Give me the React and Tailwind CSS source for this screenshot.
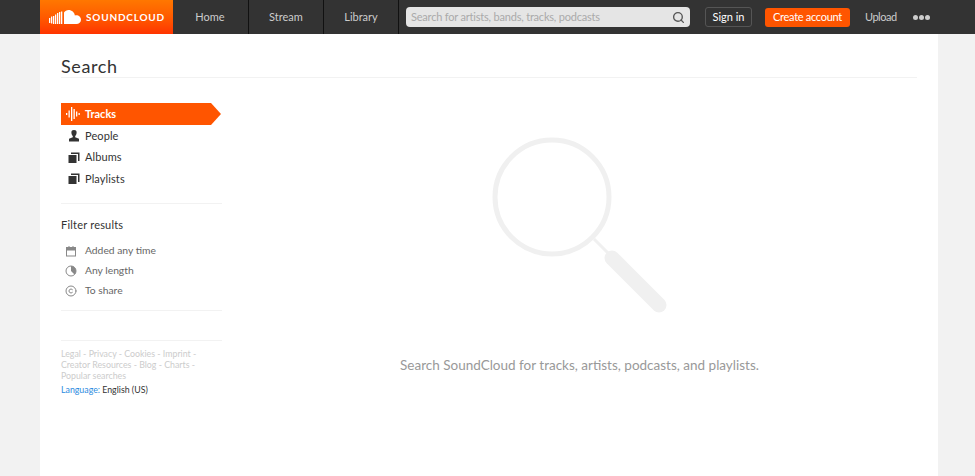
import { Search, Copyright } from 'lucide-react';

const font = { fontFamily: '"Lato", "Liberation Sans", sans-serif' };

const NavLink = ({ children, extra = '' }) => (
  <a className={`w-[75px] h-full flex items-center justify-center border-r border-[#111] text-[11px] text-[#ccc] ${extra}`}>{children}</a>
);

const Stack = () => (
  <svg width="12" height="12" viewBox="0 0 12 12" className="shrink-0">
    <path d="M3 0.500h8.500V9h-1.500V2H3z" fill="#333" />
    <rect x="0.500" y="3" width="8" height="8" fill="#333" />
  </svg>
);

const Person = () => (
  <svg width="12" height="12" viewBox="0 0 12 12" className="shrink-0">
    <path d="M6 0a2.6 2.6 0 0 1 2.6 2.8c0 1.5-.8 2.7-1.400 3.200v1.200l3.800 1.600V11.500H1V8.800l3.800-1.600V6C4.200 5.500 3.400 4.300 3.400 2.800A2.600 2.600 0 0 1 6 0z" fill="#333" />
  </svg>
);

const Logo = () => (
  <svg width="32" height="15" viewBox="0 0 32 15" fill="#fff" className="shrink-0">
    <rect x="0" y="8" width="1.300" height="5" />
    <rect x="2" y="6.500" width="1.300" height="7" />
    <rect x="4" y="6" width="1.300" height="8" />
    <rect x="6" y="4.500" width="1.300" height="9.500" />
    <rect x="8" y="3" width="1.300" height="11" />
    <rect x="10" y="2" width="1.300" height="12" />
    <rect x="12" y="1.500" width="1.300" height="12.500" />
    <path d="M15 14V2.500C16 1 17.700 0 19.500 0c3.300 0 6 2.400 6.400 5.600.4-.2.900-.3 1.400-.3 2.600 0 4.700 1.900 4.700 4.400S30 14 27.400 14z" />
  </svg>
);

const Wave = () => (
  <svg width="14" height="14" viewBox="0 0 14 14" fill="#fff" className="shrink-0">
    <rect x="0" y="6" width="1.300" height="2" />
    <rect x="2.500" y="3.500" width="1.300" height="7" />
    <rect x="5" y="0" width="1.300" height="14" />
    <rect x="7.500" y="2" width="1.300" height="10" />
    <rect x="10" y="4.500" width="1.300" height="5" />
    <rect x="12.500" y="6" width="1.300" height="2" />
  </svg>
);

const Cal = () => (
  <svg width="12" height="12" viewBox="0 0 12 12" className="shrink-0">
    <path d="M1 2h2.500V1h1v1h3V1h1v1H11v9.500H1zM2 5.500V10.500h8V5.500z" fill="#888" fillRule="evenodd" />
  </svg>
);

const Clock = () => (
  <svg width="12" height="12" viewBox="0 0 12 12" className="shrink-0">
    <circle cx="6" cy="6" r="5" fill="#fff" stroke="#888" strokeWidth="1" />
    <path d="M6 6V1a5 5 0 0 1 3.500 8.500z" fill="#888" />
  </svg>
);

export default function App() {
  return (
    <div className="h-[476px] overflow-hidden bg-[#f2f2f2] text-[#333]" style={font}>
      <header className="h-[34px] bg-[#333] flex items-center">
        <div className="w-[40px]" />
        <a className="w-[134px] h-full flex items-center gap-[5px] pl-[9px] bg-gradient-to-b from-[#ff7700] to-[#ff3300] border-r border-[#333]">
          <Logo />
          <span className="text-[10px] font-bold tracking-[0.8px] text-white">SOUNDCLOUD</span>
        </a>
        <NavLink extra="pr-[2px]">Home</NavLink>
        <NavLink>Stream</NavLink>
        <NavLink>Library</NavLink>
        <div className="ml-[7px] w-[284px] h-[20px] bg-[#e5e5e5] rounded-[4px] flex items-center justify-between pl-[5px] pr-[5px] text-[11px] tracking-[-0.2px] text-[#aaa]">
          <span>Search for artists, bands, tracks, podcasts</span>
          <Search size={13} strokeWidth={2.5} className="text-[#555]" />
        </div>
        <a className="ml-[15px] w-[47px] h-[20px] border border-[#555] rounded-[3px] flex items-center justify-center text-[11px] text-white">Sign in</a>
        <a className="ml-[13px] w-[85px] h-[19px] bg-[#ff5500] rounded-[3px] flex items-center justify-center text-[11px] tracking-[-0.3px] text-white">Create account</a>
        <a className="ml-[15px] text-[11px] tracking-[-0.5px] text-[#ccc]">Upload</a>
        <div className="ml-[16px] flex gap-[1px]">
          <span className="w-[5px] h-[5px] rounded-full bg-[#ccc]" />
          <span className="w-[5px] h-[5px] rounded-full bg-[#ccc]" />
          <span className="w-[5px] h-[5px] rounded-full bg-[#ccc]" />
        </div>
      </header>

      <main className="ml-[40px] w-[898px] h-[442px] bg-white px-[21px] pt-[19px]">
        <h1 className="h-[24px] text-[18px] leading-[26px] tracking-[0.6px] text-[#333] border-b border-[#f2f2f2] box-content">Search</h1>

        <div className="flex mt-[25px]">
          <aside className="w-[161px] shrink-0">
            <nav className="text-[11px] pb-[13px] border-b border-[#f2f2f2]">
              <a className="h-[22px] w-[160px] flex items-center gap-[5px] pl-[5px] bg-[#ff5500] text-white font-bold [clip-path:polygon(0_0,150px_0,160px_50%,150px_100%,0_100%)]">
                <Wave /> Tracks
              </a>
              <a className="h-[22px] flex items-center gap-[5px] pl-[7px] tracking-[0.1px]"><Person /> People</a>
              <a className="h-[21px] flex items-center gap-[5px] pl-[7px] tracking-[0.1px]"><Stack /> Albums</a>
              <a className="h-[22px] flex items-center gap-[5px] pl-[7px] tracking-[0.1px]"><Stack /> Playlists</a>
            </nav>

            <div className="pt-[13px] pb-[9px] border-b border-[#f2f2f2]">
              <h2 className="text-[11px] leading-[16px] tracking-[0.2px] text-[#333] mb-[8px]">Filter results</h2>
              <div className="text-[10.300px] text-[#666]">
                <div className="h-[20px] flex items-center gap-[8px] pl-[4px]"><Cal /> Added any time</div>
                <div className="h-[20px] flex items-center gap-[8px] pl-[4px]"><Clock /> Any length</div>
                <div className="h-[20px] flex items-center gap-[8px] pl-[4px]"><Copyright size={12} className="text-[#888] shrink-0" /> To share</div>
              </div>
            </div>

            <div className="mt-[29px] pt-[7px] border-t border-[#f2f2f2] text-[8.800px] leading-[11px] text-[#ccc]">
              <p>Legal - Privacy - Cookies - Imprint -</p>
              <p>Creator Resources - Blog - Charts -</p>
              <p>Popular searches</p>
              <p className="mt-[3px] text-[#333]"><span className="text-[#2b8be0]">Language:</span> English (US)</p>
            </div>
          </aside>

          <section className="flex-1 flex flex-col items-center pt-[34px]">
            <svg width="176" height="176" viewBox="0 0 176 176" className="ml-[20px]">
              <circle cx="60" cy="60" r="57" fill="none" stroke="#f0f0f0" strokeWidth="5" />
              <path d="M102 102l14 14" stroke="#f0f0f0" strokeWidth="3" fill="none" />
              <path d="M120 121l47 47" stroke="#f0f0f0" strokeWidth="15" strokeLinecap="round" fill="none" />
            </svg>
            <p className="mt-[42px] ml-[20px] text-[13.500px] text-[#999]">Search SoundCloud for tracks, artists, podcasts, and playlists.</p>
          </section>
        </div>
      </main>
    </div>
  );
}
